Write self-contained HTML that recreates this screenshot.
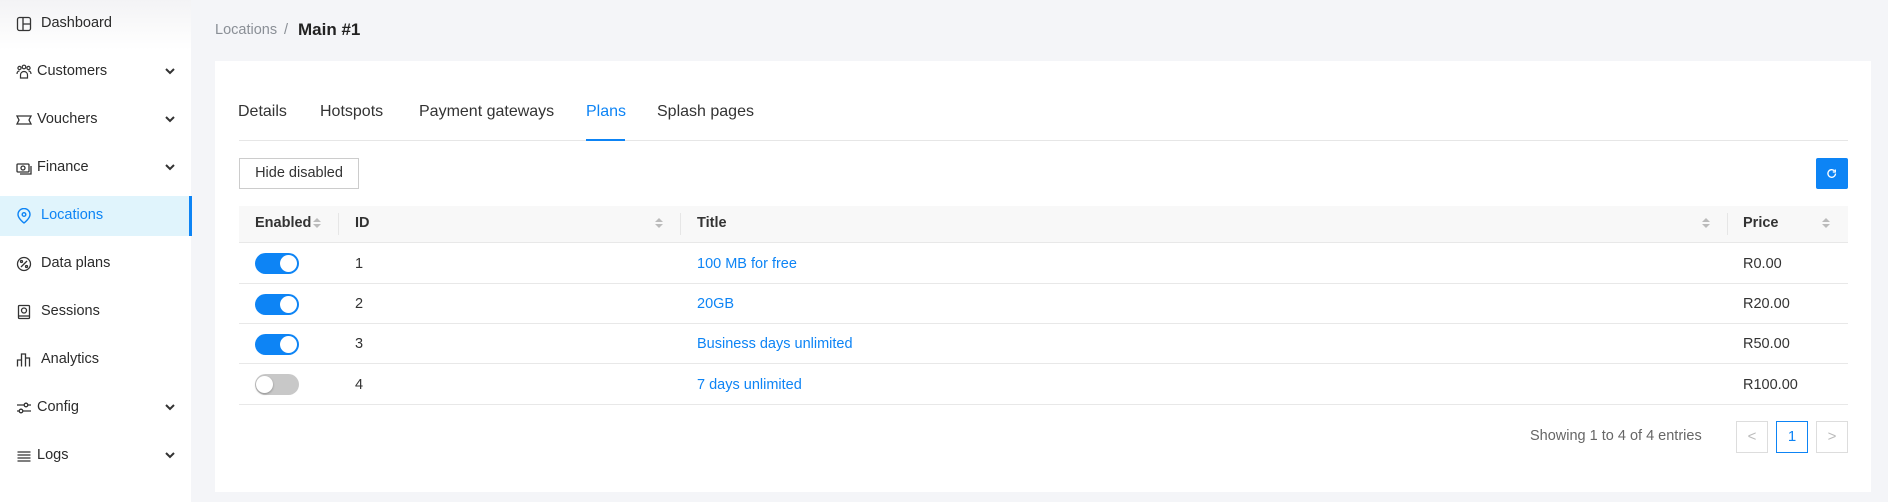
<!DOCTYPE html>
<html><head><meta charset="utf-8"><style>
*{box-sizing:border-box;margin:0;padding:0}
body{width:1888px;height:502px;overflow:hidden;background:#f4f5f8;font-family:"Liberation Sans",sans-serif;color:#333;position:relative}
.a{position:absolute;white-space:nowrap}
#side{position:absolute;left:0;top:0;width:191px;height:502px;background:#fff}
#side .top{position:absolute;left:0;top:0;width:191px;height:50px;background:linear-gradient(#f3f3f5,#fff)}
.it{position:absolute;left:0;width:191px;height:40px;font-size:14.5px;color:#2b2b2b}
.it svg.ic{position:absolute;left:16px;top:12px}
.it span{position:absolute;top:11px}
.chev{position:absolute;left:164px;top:14px}
.act{background:#e0f4fc;color:#0d84f5}
.act:after{content:"";position:absolute;right:-1px;top:0;width:3px;height:40px;background:#0d84f5}
#card{position:absolute;left:215px;top:61px;width:1656px;height:431px;background:#fff}
.tab{font-size:16px;top:103px;color:#333}
.th{font-size:14.5px;font-weight:bold;top:215px}
.row{position:absolute;left:239px;width:1609px;border-bottom:1px solid #e8e8e8;height:40px}
.cell{font-size:14.5px}
.link{color:#0d84f5}
.tg{position:absolute;left:255px;width:44px;height:21px;border-radius:11px;background:#0d84f5}
.tg:after{content:"";position:absolute;right:2px;top:2px;width:17px;height:17px;border-radius:50%;background:#fff}
.tg.off{background:#c8c8c8}
.tg.off:after{left:1px;right:auto;box-shadow:0 1px 2px rgba(0,0,0,.3)}
.sort{position:absolute;width:8px;height:12px}
.sort:before{content:"";position:absolute;left:0;top:0;border:4px solid transparent;border-bottom:4px solid #bbb;border-top:0}
.sort:after{content:"";position:absolute;left:0;top:6px;border:4px solid transparent;border-top:4px solid #bbb;border-bottom:0}
.div{position:absolute;top:213px;width:1px;height:22px;background:#e6e6e6}
.pb{position:absolute;top:421px;width:32px;height:32px;border:1px solid #ddd;font-size:15px;text-align:center;line-height:30px;color:#bbb;background:#fff}
</style></head><body>
<div id="side"><div class="top"></div>
<div class="it" style="top:4px"><svg class="ic" width="16" height="16" viewBox="0 0 16 16" fill="none" stroke="#333" stroke-width="1.3"><rect x="1.5" y="1.5" width="13" height="13" rx="2"/><path d="M7 1.5v13M7 8h7.5"/></svg><span style="left:41px">Dashboard</span></div>
<div class="it" style="top:52px"><svg class="ic" width="16" height="16" viewBox="0 0 16 16" fill="none" stroke="#333" stroke-width="1.2"><circle cx="3.5" cy="4" r="1.6"/><circle cx="8" cy="3" r="1.8"/><circle cx="12.5" cy="4" r="1.6"/><path d="M1 10c0-2 1-3 2.5-3M15 10c0-2-1-3-2.5-3M4.5 14v-3c0-2 1.5-3.5 3.5-3.5s3.5 1.5 3.5 3.5v3z"/></svg><span style="left:37px">Customers</span><svg class="chev" width="12" height="10" viewBox="0 0 12 10"><path d="M2 3l4 4 4-4" stroke="#333" stroke-width="2" fill="none"/></svg></div>
<div class="it" style="top:100px"><svg class="ic" width="16" height="16" viewBox="0 0 16 16" fill="none" stroke="#333" stroke-width="1.3"><path d="M1 4h14l-2 4 2 4H1l2-4z"/></svg><span style="left:37px">Vouchers</span><svg class="chev" width="12" height="10" viewBox="0 0 12 10"><path d="M2 3l4 4 4-4" stroke="#333" stroke-width="2" fill="none"/></svg></div>
<div class="it" style="top:148px"><svg class="ic" width="16" height="16" viewBox="0 0 16 16" fill="none" stroke="#333" stroke-width="1.3"><rect x="1" y="4" width="12" height="8" rx="1"/><circle cx="7" cy="8" r="2"/><path d="M15 6v8H4"/></svg><span style="left:37px">Finance</span><svg class="chev" width="12" height="10" viewBox="0 0 12 10"><path d="M2 3l4 4 4-4" stroke="#333" stroke-width="2" fill="none"/></svg></div>
<div class="it act" style="top:196px"><svg class="ic" width="16" height="16" viewBox="0 0 16 16" fill="none" stroke="#0d84f5" stroke-width="1.4"><path d="M8 15s-6-4.5-6-8.5a6 6 0 0 1 12 0C14 10.5 8 15 8 15z"/><circle cx="8" cy="6.5" r="1.8"/></svg><span style="left:41px">Locations</span></div>
<div class="it" style="top:244px"><svg class="ic" width="16" height="16" viewBox="0 0 16 16" fill="none" stroke="#333" stroke-width="1.3"><circle cx="8" cy="8" r="6.5"/><path d="M5 11l6-6"/><circle cx="5.5" cy="5.5" r="1"/><circle cx="10.5" cy="10.5" r="1"/></svg><span style="left:41px">Data plans</span></div>
<div class="it" style="top:292px"><svg class="ic" width="16" height="16" viewBox="0 0 16 16" fill="none" stroke="#333" stroke-width="1.3"><rect x="2.5" y="1.5" width="11" height="13" rx="1"/><circle cx="8" cy="6.5" r="2.5"/><path d="M2.5 12h11"/></svg><span style="left:41px">Sessions</span></div>
<div class="it" style="top:340px"><svg class="ic" width="16" height="16" viewBox="0 0 16 16" fill="none" stroke="#333" stroke-width="1.3"><path d="M1.5 14.5V8h4v6.5M5.5 14.5V2h4v12.5M9.5 14.5V6h4v8.5"/></svg><span style="left:41px">Analytics</span></div>
<div class="it" style="top:388px"><svg class="ic" width="16" height="16" viewBox="0 0 16 16" fill="none" stroke="#333" stroke-width="1.3"><path d="M1 5h14M1 11h14"/><circle cx="10" cy="5" r="1.8" fill="#fff"/><circle cx="5" cy="11" r="1.8" fill="#fff"/></svg><span style="left:37px">Config</span><svg class="chev" width="12" height="10" viewBox="0 0 12 10"><path d="M2 3l4 4 4-4" stroke="#333" stroke-width="2" fill="none"/></svg></div>
<div class="it" style="top:436px"><svg class="ic" width="16" height="16" viewBox="0 0 16 16" fill="none" stroke="#333" stroke-width="1.2"><path d="M1.5 4h13M1.5 7h13M1.5 10h13M1.5 13h13"/></svg><span style="left:37px">Logs</span><svg class="chev" width="12" height="10" viewBox="0 0 12 10"><path d="M2 3l4 4 4-4" stroke="#333" stroke-width="2" fill="none"/></svg></div>
</div>

<div class="a" style="left:215px;top:22px;font-size:14.5px;color:#8a8f96">Locations</div>
<div class="a" style="left:284px;top:22px;font-size:14.5px;color:#8a8f96">/</div>
<div class="a" style="left:298px;top:20px;font-size:17px;font-weight:bold;color:#222">Main #1</div>

<div id="card"></div>
<div class="a tab" style="left:238px">Details</div>
<div class="a tab" style="left:320px">Hotspots</div>
<div class="a tab" style="left:419px">Payment gateways</div>
<div class="a tab" style="left:586px;color:#0d84f5">Plans</div>
<div class="a tab" style="left:657px">Splash pages</div>
<div class="a" style="left:239px;top:140px;width:1609px;height:1px;background:#e6e6e6"></div>
<div class="a" style="left:586px;top:139px;width:39px;height:2px;background:#0d84f5"></div>

<div class="a" style="left:239px;top:158px;width:120px;height:31px;border:1px solid #ccc;font-size:14.5px;text-align:center;line-height:29px;color:#333">Hide disabled</div>
<div class="a" style="left:1816px;top:158px;width:32px;height:31px;background:#0d84f5;border-radius:2px"><svg width="32" height="31" viewBox="0 0 32 31"><path d="M19.5 15.5a3.8 3.8 0 1 1-1.1-2.7" fill="none" stroke="#fff" stroke-width="1.3"/><path d="M19.3 11.5v2.5h-2.5" fill="none" stroke="#fff" stroke-width="1.3"/></svg></div>

<div class="a" style="left:239px;top:206px;width:1609px;height:37px;background:#f8f8f8;border-bottom:1px solid #e8e8e8"></div>
<div class="a th" style="left:255px">Enabled</div><div class="sort" style="left:313px;top:218px"></div>
<div class="div" style="left:338px"></div>
<div class="a th" style="left:355px">ID</div><div class="sort" style="left:655px;top:218px"></div>
<div class="div" style="left:680px"></div>
<div class="a th" style="left:697px">Title</div><div class="sort" style="left:1702px;top:218px"></div>
<div class="div" style="left:1727px"></div>
<div class="a th" style="left:1743px">Price</div><div class="sort" style="left:1822px;top:218px"></div>

<div class="row" style="top:244px"></div>
<div class="row" style="top:284px"></div>
<div class="row" style="top:324px"></div>
<div class="row" style="top:365px"></div>

<div class="tg" style="top:253px"></div><div class="a cell" style="left:355px;top:256px">1</div><div class="a cell link" style="left:697px;top:256px">100 MB for free</div><div class="a cell" style="left:1743px;top:256px">R0.00</div>
<div class="tg" style="top:294px"></div><div class="a cell" style="left:355px;top:296px">2</div><div class="a cell link" style="left:697px;top:296px">20GB</div><div class="a cell" style="left:1743px;top:296px">R20.00</div>
<div class="tg" style="top:334px"></div><div class="a cell" style="left:355px;top:336px">3</div><div class="a cell link" style="left:697px;top:336px">Business days unlimited</div><div class="a cell" style="left:1743px;top:336px">R50.00</div>
<div class="tg off" style="top:374px"></div><div class="a cell" style="left:355px;top:377px">4</div><div class="a cell link" style="left:697px;top:377px">7 days unlimited</div><div class="a cell" style="left:1743px;top:377px">R100.00</div>

<div class="a" style="left:1530px;top:428px;font-size:14.5px;color:#666">Showing 1 to 4 of 4 entries</div>
<div class="pb" style="left:1736px">&lt;</div>
<div class="pb" style="left:1776px;border-color:#0d84f5;color:#0d84f5">1</div>
<div class="pb" style="left:1816px">&gt;</div>
</body></html>
